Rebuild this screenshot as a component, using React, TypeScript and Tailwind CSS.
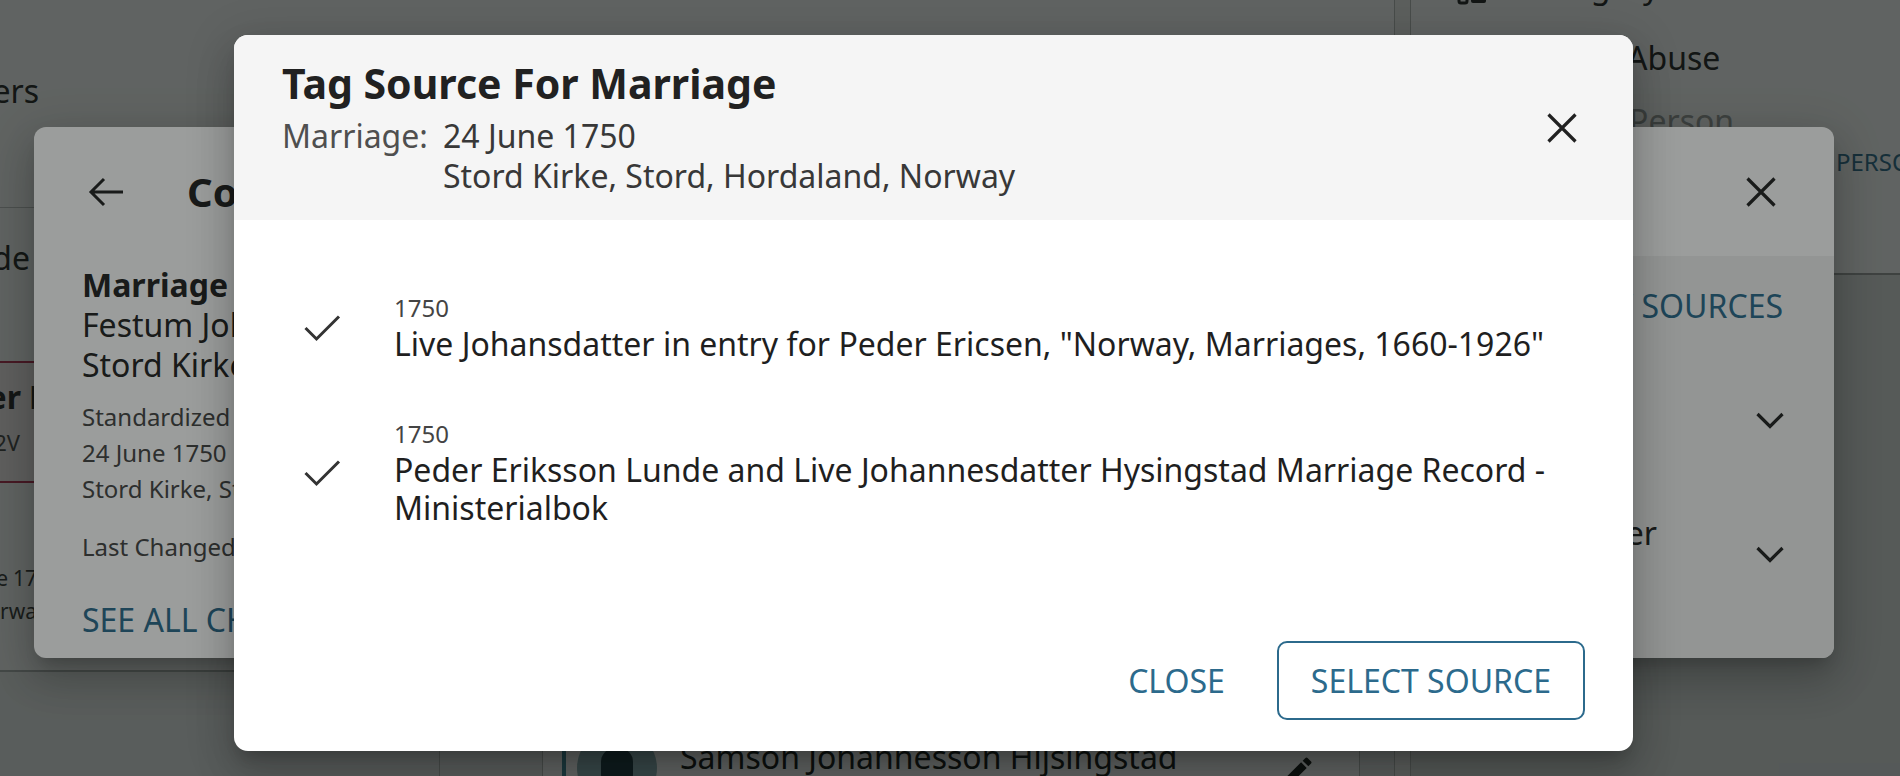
import React from "react";

const SHADOW =
  "shadow-[0_11px_15px_-7px_rgba(0,0,0,0.2),0_24px_38px_3px_rgba(0,0,0,0.14),0_9px_46px_8px_rgba(0,0,0,0.12)]";

function CloseIcon() {
  return (
    <svg width="46" height="46" viewBox="0 0 46 46" fill="none" stroke="currentColor" strokeWidth="3.2">
      <path d="M9.5 9.5 36.5 36.5M36.5 9.5 9.5 36.5" />
    </svg>
  );
}

function CheckIcon() {
  return (
    <svg width="48" height="48" viewBox="0 0 48 48" fill="none" stroke="currentColor" strokeWidth="3">
      <path d="M7.5 25 18.5 36 41 13.5" />
    </svg>
  );
}

function ChevronDown() {
  return (
    <svg width="52" height="52" viewBox="0 0 52 52" fill="none" stroke="currentColor" strokeWidth="3.2">
      <path d="M13.5 20 26 32.5 38.5 20" />
    </svg>
  );
}

function ArrowBack() {
  return (
    <svg width="48" height="48" viewBox="0 0 48 48" fill="none" stroke="currentColor" strokeWidth="3">
      <path d="M41 24H9M22 11 9 24l13 13" />
    </svg>
  );
}

function EditIcon() {
  return (
    <svg width="36" height="36" viewBox="0 0 24 24" fill="currentColor">
      <path d="M3 17.25V21h3.75L17.81 9.94l-3.75-3.75L3 17.25zM20.71 7.04c.39-.39.39-1.02 0-1.41l-2.34-2.34a1 1 0 0 0-1.41 0l-1.83 1.83 3.75 3.75 1.83-1.83z" />
    </svg>
  );
}

function PageBehind() {
  return (
    <div className="flex h-[776px] w-[1900px] bg-white text-[#222]">
      <main className="flex w-[1394px] flex-col">
        <div className="flex h-[672px] shrink-0 border-b-2 border-[#aeb1b1]">
          <section className="flex w-[440px] flex-col">
            <div className="flex h-[208px] flex-col border-b border-[#c4c6c6] pt-[71px]">
              <div className="flex w-[39px] justify-end whitespace-nowrap text-[32px] leading-[40px]">
                Family Members
              </div>
            </div>
            <div className="mt-[30px] flex w-[30px] justify-end whitespace-nowrap text-[32px] leading-[40px]">
              Show Hide
            </div>
            <div className="mt-[83px] flex flex-col border-y-2 border-[#b82a4e] bg-[#fbf3f5] pt-[14px] pb-[23px]">
              <div className="flex whitespace-nowrap text-[32px] font-bold leading-[40px]">
                <span className="flex w-[21px] shrink-0 justify-end">Peder</span>
                <span className="ml-[8px]">Lunde</span>
              </div>
              <div className="mt-[9px] flex w-[20px] justify-end whitespace-nowrap text-[22px] leading-[32px] text-[#444]">
                LZXK-22V
              </div>
            </div>
            <div className="mt-[79px] flex flex-col whitespace-nowrap text-[21px] leading-[33px] text-[#333]">
              <div className="flex">
                <span className="flex w-[8px] shrink-0 justify-end">24 June</span>
                <span className="ml-[5px]">1750</span>
              </div>
              <div className="flex">
                <span className="flex w-0 shrink-0 justify-end">Stord, Hordaland, No</span>
                <span>rway</span>
              </div>
            </div>
          </section>
        </div>
        <div className="flex flex-1 bg-[#eceeee]">
          <div className="w-[440px] border-r border-[#b9bcbc]" />
          <div className="ml-[102px] flex w-[818px] border-x border-[#b9bcbc] bg-white pl-[19px] pt-[26px]">
            <div className="flex flex-1 items-start border-l-4 border-[#3a8599] pl-[11px] pt-[39px] pr-[43px]">
              <div className="-mt-[9px] flex h-[80px] w-[80px] shrink-0 items-center justify-center overflow-hidden rounded-full bg-[#8db2b8]">
                <svg width="44" height="60" viewBox="0 0 44 60" className="mt-[20px] text-[#15323c]" fill="currentColor">
                  <rect x="6" y="0" width="32" height="40" rx="14" />
                  <rect x="0" y="36" width="44" height="24" rx="10" />
                </svg>
              </div>
              <div className="ml-[23px] whitespace-nowrap text-[32px] leading-[40px] text-[#111]">
                Samson Johannesson Hijsingstad
              </div>
              <div className="ml-auto mt-[16px] text-[#111]">
                <EditIcon />
              </div>
            </div>
          </div>
        </div>
      </main>
      <div className="w-[17px] border-x border-[#b9bcbc] bg-[#f4f4f4]" />
      <aside className="flex w-[489px] flex-col">
        <div className="-mt-[39px] flex h-[50px] shrink-0 items-center pl-[46px] text-[32px]">
          <svg width="30" height="30" viewBox="0 0 30 30" fill="#222" className="translate-y-[6px]">
            <rect x="2" y="4" width="8" height="22" rx="2" fill="none" stroke="#222" strokeWidth="3" />
            <rect x="14" y="4" width="15" height="22" rx="2" />
          </svg>
          <span className="ml-[36px]">Category</span>
        </div>
        <div className="flex h-[94px] shrink-0 items-center pl-[46px] text-[32px]">
          <span className="h-[30px] w-[30px]" />
          <span className="ml-[30px]">Report Abuse</span>
        </div>
        <div className="flex h-[32px] shrink-0 items-center pl-[46px] text-[32px] text-[#9a9c9c]">
          <span className="h-[30px] w-[30px]" />
          <span className="ml-[36px]">Merge Person</span>
        </div>
        <div className="flex h-[50px] shrink-0 items-center whitespace-nowrap text-[24px] text-[#2c6a8c]">
          <span className="flex w-[419px] shrink-0 justify-end">ADD UNRELATED</span>
          <span className="ml-[6px] shrink-0">PERSON</span>
        </div>
        <div className="h-[88px] shrink-0 border-b-2 border-[#9ea1a1]" />
        <div className="flex-1 bg-[#e2e4e4]" />
      </aside>
    </div>
  );
}

function ConclusionDialog() {
  return (
    <div className={`absolute left-[34px] top-[127px] flex h-[531px] w-[1800px] flex-col overflow-hidden rounded-[12px] bg-white text-[#222] ${SHADOW}`}>
      <div className="flex h-[129px] shrink-0 items-center pl-12 pr-[50px]">
        <ArrowBack />
        <h2 className="ml-[57px] text-[40px] font-bold leading-[48px]">Couple Relationship</h2>
        <button className="ml-auto text-[#222]" aria-label="Close">
          <CloseIcon />
        </button>
      </div>
      <div className="flex flex-1">
        <div className="flex flex-1 flex-col whitespace-nowrap px-12 pt-[9px]">
          <div className="text-[32px] font-bold leading-[40px]">Marriage</div>
          <div className="text-[32px] leading-[40px]">Festum Johannis Baptistae 1750</div>
          <div className="text-[32px] leading-[40px]">Stord Kirke, Stord, Hordaland, Norway</div>
          <div className="mt-[14px] text-[24px] leading-[36px] text-[#444]">Standardized</div>
          <div className="text-[24px] leading-[36px] text-[#444]">24 June 1750</div>
          <div className="text-[24px] leading-[36px] text-[#444]">Stord Kirke, Stord, Hordaland, Norway</div>
          <div className="mt-[22px] text-[24px] leading-[36px] text-[#444]">Last Changed: 3 March 2021</div>
          <div className="mt-[35px] text-[32px] leading-[40px] text-[#2c6a8c]">SEE ALL CHANGES</div>
        </div>
        <div className="flex w-[560px] flex-col bg-[#f2f2f2] pr-[38px]">
          <div className="flex h-[100px] items-center justify-end pr-[13px] text-[32px] text-[#2c6a8c]">
            VIEW SOURCES
          </div>
          <div className="flex h-[128px] items-center justify-end text-[#222]">
            <ChevronDown />
          </div>
          <div className="flex h-[140px] items-center justify-between text-[#222]">
            <div className="mb-[42px] ml-[48px] flex w-[335px] justify-end whitespace-nowrap text-[32px] leading-[40px]">
              Klokkerbok Register
            </div>
            <ChevronDown />
          </div>
        </div>
      </div>
    </div>
  );
}

function TagSourceDialog() {
  return (
    <div className={`absolute left-[234px] top-[35px] flex w-[1399px] flex-col overflow-hidden rounded-[14px] bg-white ${SHADOW}`}>
      {/* Header */}
      <div className="flex items-center justify-between bg-[#f5f5f5] px-12 pt-[24px] pb-[24px]">
        <div>
          <h2 className="text-[41px] font-bold leading-[48px] text-[#212121]">Tag Source For Marriage</h2>
          <div className="mt-[9px] flex text-[32px] leading-[40px]">
            <span className="w-[161px] text-[#4f4f4f]">Marriage:</span>
            <div className="text-[#383838]">
              <div>24 June 1750</div>
              <div>Stord Kirke, Stord, Hordaland, Norway</div>
            </div>
          </div>
        </div>
        <button className="text-[#212121]" aria-label="Close">
          <CloseIcon />
        </button>
      </div>

      {/* Sources */}
      <ul className="flex flex-col gap-[54px] px-12 pt-[71px]">
        <li className="flex items-center pl-4">
          <span className="text-[#333]">
            <CheckIcon />
          </span>
          <div className="ml-12">
            <div className="text-[24px] leading-[34px] text-[#444]">1750</div>
            <div className="text-[32px] leading-[38px] text-[#1f1f1f]">
              Live Johansdatter in entry for Peder Ericsen, "Norway, Marriages, 1660-1926"
            </div>
          </div>
        </li>
        <li className="flex items-center pl-4">
          <span className="text-[#333]">
            <CheckIcon />
          </span>
          <div className="ml-12">
            <div className="text-[24px] leading-[34px] text-[#444]">1750</div>
            <div className="text-[32px] leading-[38px] text-[#1f1f1f]">
              Peder Eriksson Lunde and Live Johannesdatter Hysingstad Marriage Record - Ministerialbok
            </div>
          </div>
        </li>
      </ul>

      {/* Actions */}
      <div className="flex justify-end gap-[18px] px-12 pt-[114px] pb-[31px]">
        <button className="h-[79px] rounded-[10px] px-[34px] text-[32px] text-[#2c6a8c]">CLOSE</button>
        <button className="h-[79px] rounded-[10px] border-2 border-[#2c6a8c] px-[32px] text-[32px] text-[#2c6a8c]">
          SELECT SOURCE
        </button>
      </div>
    </div>
  );
}

export default function App() {
  return (
    <div className="relative h-[776px] w-[1900px] overflow-hidden font-['Noto_Sans','Open_Sans',sans-serif]">
      <PageBehind />
      <div className="absolute inset-0 bg-[rgba(11,16,15,0.41)]" />
      <ConclusionDialog />
      <div className="absolute inset-0 bg-[rgba(11,16,15,0.41)]" />
      <TagSourceDialog />
    </div>
  );
}
